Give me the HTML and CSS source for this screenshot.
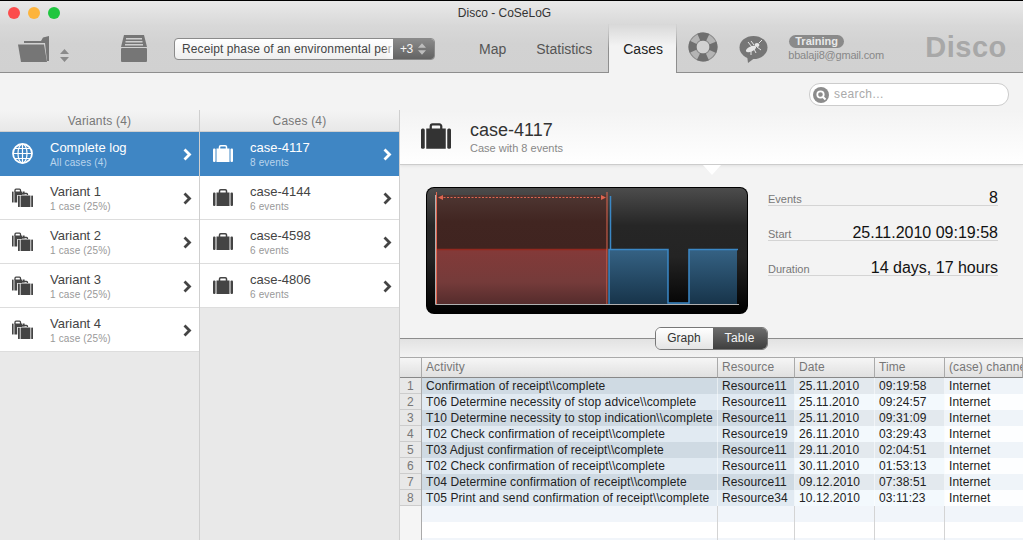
FILE: index.html
```html
<!DOCTYPE html>
<html>
<head>
  <meta charset="utf-8">
  <title>Disco - CoSeLoG</title>
  <link rel="stylesheet" href="styles.css">
</head>
<body>
  <svg class="defs" width="0" height="0">
    <symbol id="suitcase" viewBox="0 0 20 17">
      <path d="M6.5 4V2A1.2 1.2 0 0 1 7.700 .8h4.600A1.200 1.200 0 0 1 13.500 2v2" fill="none" stroke="currentColor" stroke-width="1.500"/>
      <rect x="3.500" y="3.500" width="13" height="13.500"/>
      <rect x="0" y="3.500" width="2.500" height="13.500" rx="1"/>
      <rect x="17.500" y="3.500" width="2.500" height="13.500" rx="1"/>
    </symbol>
    <symbol id="suitcases" viewBox="0 0 21 19">
      <path d="M3 4V2.200A1 1 0 0 1 4 1.200h3.500a1 1 0 0 1 1 1V4" fill="none" stroke="currentColor" stroke-width="1.300"/>
      <rect x="0" y="3.500" width="1.600" height="11" rx=".6"/>
      <rect x="2.400" y="3.500" width="8" height="11"/>
      <rect x="11" y="3.500" width="1.600" height="3"/>
      <path d="M9.500 8V6.500a1 1 0 0 1 1-1h4a1 1 0 0 1 1 1V8" fill="none" stroke="currentColor" stroke-width="1.300"/>
      <rect x="5.200" y="7" width="15.800" height="12" fill="#fff"/>
      <rect x="6" y="7.500" width="1.800" height="11.500" rx=".6"/>
      <rect x="8.600" y="7.500" width="9.800" height="11.500"/>
      <rect x="19.200" y="7.500" width="1.800" height="11.500" rx=".6"/>
    </symbol>
    <symbol id="chevron" viewBox="0 0 9 13">
      <path d="M1.500 1.500L6.500 6.500L1.500 11.500" fill="none" stroke="currentColor" stroke-width="2.800"/>
    </symbol>
    <symbol id="updown" viewBox="0 0 9 13">
      <path d="M4.500 0L9 5H0Z M0 8H9L4.500 13Z"/>
    </symbol>
  </svg>

  <div class="toolbar">
    <div class="titlebar">
      <div class="lights">
        <span class="light red"></span>
        <span class="light yellow"></span>
        <span class="light green"></span>
      </div>
      Disco - CoSeLoG
    </div>
    <div class="tools">
      <svg class="folder" width="32" height="26" viewBox="0 0 32 26">
        <path d="M6 5H23L25 1.500L31 0V25H29L27 7H6Z" fill="#767676"/>
        <path d="M0 8.500H26L29 26H3Z" fill="#767676"/>
      </svg>
      <svg class="stepper" width="9" height="13" fill="#8a8a8a"><use href="#updown"/></svg>
      <svg class="archive" width="26" height="27" viewBox="0 0 26 27">
        <path d="M3 0H23L26 12H0Z" fill="#767676"/>
        <path d="M5 3H21V4.500H5Z M4.500 6H21.500V7.500H4.500Z M4 9H22V10.500H4Z" fill="#cfcfcf"/>
        <rect x="0" y="13" width="26" height="14" rx="1" fill="#767676"/>
      </svg>
      <div class="logselect">
        <span class="logname">Receipt phase of an environmental per</span>
        <span class="logcount">+3 <svg width="8" height="12" fill="#bdbdbd"><use href="#updown"/></svg></span>
      </div>
      <div class="tabs">
        <div class="tab">Map</div>
        <div class="tab">Statistics</div>
        <div class="tab active">Cases</div>
      </div>
      <svg class="buoy" width="30" height="30" viewBox="0 0 30 30">
        <circle cx="15" cy="15" r="10.500" fill="none" stroke="#8a8a8a" stroke-width="8"/>
        <circle cx="15" cy="15" r="10.500" fill="none" stroke="#b4b4b4" stroke-width="6"/>
        <circle cx="15" cy="15" r="10.500" fill="none" stroke="#6f6f6f" stroke-width="8" stroke-dasharray="9 7.490" stroke-dashoffset="4.500"/>
      </svg>
      <svg class="bubble" width="29" height="27" viewBox="0 0 29 27">
        <ellipse cx="14.500" cy="11.500" rx="14" ry="11.500" fill="#767676"/>
        <path d="M8 19L9 27L17 21Z" fill="#767676"/>
        <g stroke="#e6e6e6" stroke-width="1" fill="#e6e6e6">
          <ellipse cx="12" cy="13" rx="5.500" ry="2.500" transform="rotate(-25 12 13)" stroke="none"/>
          <ellipse cx="18" cy="9" rx="2.400" ry="2" stroke="none"/>
          <path d="M15 9L12 5M13 11L9 6M12 15L12 19M15 13L17 17M18 11L22 14M20 7L23 4" fill="none"/>
        </g>
      </svg>
      <div class="account">
        <span class="badge">Training</span>
        <span class="email">bbalaji8@gmail.com</span>
      </div>
      <div class="brand">Disco</div>
    </div>
  </div>

  <div class="searchbar">
    <div class="search">
      <svg width="16" height="16" viewBox="0 0 16 16">
        <circle cx="8" cy="8" r="8" fill="#8c8c8c"/>
        <circle cx="7.500" cy="7.500" r="3.200" fill="none" stroke="#fff" stroke-width="1.800"/>
        <path d="M10 10L12.500 12.500" stroke="#fff" stroke-width="2"/>
      </svg>
      <span class="search-hint">search...</span>
    </div>
  </div>

  <div class="main">
    <div class="column">
      <div class="column-head">Variants (4)</div>
      <div class="item selected">
        <svg class="item-icon" width="21" height="21" viewBox="0 0 21 21" fill="none" stroke="#fff">
          <circle cx="10.500" cy="10.500" r="9.500" stroke-width="1.800"/>
          <ellipse cx="10.500" cy="10.500" rx="4.500" ry="9.500" stroke-width="1.200"/>
          <path d="M10.500 1V20M1 10.500H20M2.500 5.500H18.500M2.500 15.500H18.500" stroke-width="1.200"/>
        </svg>
        <div class="item-text"><div class="item-title">Complete log</div><div class="item-sub">All cases (4)</div></div>
        <svg class="chevron" width="9" height="13"><use href="#chevron"/></svg>
      </div>
      <div class="item">
        <svg class="item-icon" width="21" height="19"><use href="#suitcases"/></svg>
        <div class="item-text"><div class="item-title">Variant 1</div><div class="item-sub">1 case (25%)</div></div>
        <svg class="chevron" width="9" height="13"><use href="#chevron"/></svg>
      </div>
      <div class="item">
        <svg class="item-icon" width="21" height="19"><use href="#suitcases"/></svg>
        <div class="item-text"><div class="item-title">Variant 2</div><div class="item-sub">1 case (25%)</div></div>
        <svg class="chevron" width="9" height="13"><use href="#chevron"/></svg>
      </div>
      <div class="item">
        <svg class="item-icon" width="21" height="19"><use href="#suitcases"/></svg>
        <div class="item-text"><div class="item-title">Variant 3</div><div class="item-sub">1 case (25%)</div></div>
        <svg class="chevron" width="9" height="13"><use href="#chevron"/></svg>
      </div>
      <div class="item">
        <svg class="item-icon" width="21" height="19"><use href="#suitcases"/></svg>
        <div class="item-text"><div class="item-title">Variant 4</div><div class="item-sub">1 case (25%)</div></div>
        <svg class="chevron" width="9" height="13"><use href="#chevron"/></svg>
      </div>
    </div>

    <div class="column">
      <div class="column-head">Cases (4)</div>
      <div class="item selected">
        <svg class="item-icon" width="20" height="17"><use href="#suitcase"/></svg>
        <div class="item-text"><div class="item-title">case-4117</div><div class="item-sub">8 events</div></div>
        <svg class="chevron" width="9" height="13"><use href="#chevron"/></svg>
      </div>
      <div class="item">
        <svg class="item-icon" width="20" height="17"><use href="#suitcase"/></svg>
        <div class="item-text"><div class="item-title">case-4144</div><div class="item-sub">6 events</div></div>
        <svg class="chevron" width="9" height="13"><use href="#chevron"/></svg>
      </div>
      <div class="item">
        <svg class="item-icon" width="20" height="17"><use href="#suitcase"/></svg>
        <div class="item-text"><div class="item-title">case-4598</div><div class="item-sub">6 events</div></div>
        <svg class="chevron" width="9" height="13"><use href="#chevron"/></svg>
      </div>
      <div class="item">
        <svg class="item-icon" width="20" height="17"><use href="#suitcase"/></svg>
        <div class="item-text"><div class="item-title">case-4806</div><div class="item-sub">6 events</div></div>
        <svg class="chevron" width="9" height="13"><use href="#chevron"/></svg>
      </div>
    </div>

    <div class="detail">
      <div class="detail-head">
        <svg class="detail-icon" width="30" height="26"><use href="#suitcase"/></svg>
        <div>
          <div class="detail-title">case-4117</div>
          <div class="detail-sub">Case with 8 events</div>
        </div>
      </div>

      <div class="overview">
        <svg class="chart" width="322" height="127" viewBox="0 0 322 127">
          <defs>
            <linearGradient id="chartbg" x1="0" y1="0" x2="0" y2="1">
              <stop offset="0" stop-color="#4c4c4c"/>
              <stop offset=".3" stop-color="#262626"/>
              <stop offset=".55" stop-color="#242424"/>
              <stop offset="1" stop-color="#000"/>
            </linearGradient>
            <linearGradient id="redtop" x1="0" y1="0" x2="0" y2="1">
              <stop offset="0" stop-color="#4e3632"/>
              <stop offset=".5" stop-color="#412521"/>
              <stop offset="1" stop-color="#402420"/>
            </linearGradient>
            <linearGradient id="redlow" x1="0" y1="0" x2="0" y2="1">
              <stop offset="0" stop-color="#843a39"/>
              <stop offset=".6" stop-color="#753b3a"/>
              <stop offset="1" stop-color="#552c2c"/>
            </linearGradient>
            <linearGradient id="bluelow" x1="0" y1="0" x2="0" y2="1">
              <stop offset="0" stop-color="#356284"/>
              <stop offset="1" stop-color="#17344a"/>
            </linearGradient>
          </defs>
          <rect width="322" height="127" rx="8" fill="#000"/>
          <rect x="1" y="1" width="320" height="125" rx="7" fill="url(#chartbg)"/>
          <rect x="11" y="8" width="170" height="54" fill="url(#redtop)"/>
          <rect x="11" y="62" width="170" height="55" fill="url(#redlow)"/>
          <path d="M11 62.500H181" stroke="#93281f" stroke-width="1.500"/>
          <path d="M183 117V62.500H242V116H263V62.500H311V117Z" fill="url(#bluelow)"/>
          <path d="M183 117V62.500H242V116H263V62.500H312" fill="none" stroke="#3b88c6" stroke-width="1.500"/>
          <path d="M184.500 62V9" stroke="#3b88c6" stroke-width="1.500"/>
          <path d="M10.500 5V117M181 5V117" stroke="#e0654f" stroke-width="1"/>
          <path d="M14 10.500H178" stroke="#e0654f" stroke-width="1" stroke-dasharray="2 1.500"/>
          <path d="M12 10.500L17 8V13Z M180 10.500L175 8V13Z" fill="#e0654f"/>
          <path d="M9.500 8V117.500H313" stroke="#b0b0b0" stroke-width="1" fill="none"/>
        </svg>
        <div class="stats">
          <div class="stat"><span class="stat-label">Events</span><span class="stat-value">8</span></div>
          <div class="stat"><span class="stat-label">Start</span><span class="stat-value">25.11.2010 09:19:58</span></div>
          <div class="stat"><span class="stat-label">Duration</span><span class="stat-value">14 days, 17 hours</span></div>
        </div>
      </div>

      <div class="switchbar">
        <div class="switch">
          <span class="switch-btn">Graph</span>
          <span class="switch-btn on">Table</span>
        </div>
      </div>

      <table class="events">
        <colgroup>
          <col class="c-no"><col class="c-act"><col class="c-res"><col class="c-date"><col class="c-time"><col>
        </colgroup>
        <thead>
          <tr><th></th><th>Activity</th><th>Resource</th><th>Date</th><th>Time</th><th>(case) channel</th></tr>
        </thead>
        <tbody>
          <tr><td>1</td><td>Confirmation of receipt\\complete</td><td>Resource11</td><td>25.11.2010</td><td>09:19:58</td><td>Internet</td></tr>
          <tr><td>2</td><td>T06 Determine necessity of stop advice\\complete</td><td>Resource11</td><td>25.11.2010</td><td>09:24:57</td><td>Internet</td></tr>
          <tr><td>3</td><td>T10 Determine necessity to stop indication\\complete</td><td>Resource11</td><td>25.11.2010</td><td>09:31:09</td><td>Internet</td></tr>
          <tr><td>4</td><td>T02 Check confirmation of receipt\\complete</td><td>Resource19</td><td>26.11.2010</td><td>03:29:43</td><td>Internet</td></tr>
          <tr><td>5</td><td>T03 Adjust confirmation of receipt\\complete</td><td>Resource11</td><td>29.11.2010</td><td>02:04:51</td><td>Internet</td></tr>
          <tr><td>6</td><td>T02 Check confirmation of receipt\\complete</td><td>Resource11</td><td>30.11.2010</td><td>01:53:13</td><td>Internet</td></tr>
          <tr><td>7</td><td>T04 Determine confirmation of receipt\\complete</td><td>Resource11</td><td>09.12.2010</td><td>07:38:51</td><td>Internet</td></tr>
          <tr><td>8</td><td>T05 Print and send confirmation of receipt\\complete</td><td>Resource34</td><td>10.12.2010</td><td>03:11:23</td><td>Internet</td></tr>
          <tr class="empty"><td></td><td></td><td></td><td></td><td></td><td></td></tr>
          <tr class="empty"><td></td><td></td><td></td><td></td><td></td><td></td></tr>
          <tr class="empty"><td></td><td></td><td></td><td></td><td></td><td></td></tr>
        </tbody>
      </table>
    </div>
  </div>
</body>
</html>
```

FILE: styles.css
```css
html, body {
  height: 100%;
}

body {
  margin: 0;
  overflow: hidden;
  background: #f3f3f3;
  font: 12px "Liberation Sans", Arial, sans-serif;
  color: #222;
}

.defs {
  display: block;
}

/* window toolbar */
.toolbar {
  height: 71px;
  border-top: 1px solid #000;
  border-bottom: 1px solid #8e8e8e;
  background: linear-gradient(#e9e9e9, #d8d8d8 35%, #d2d2d2 60%, #d1d1d1);
}

.titlebar {
  display: flex;
  justify-content: center;
  align-items: center;
  position: relative;
  height: 23px;
  padding-right: 14px;
  font-size: 12px;
  color: #333;
}

.lights {
  position: absolute;
  left: 8px;
  top: 6px;
  display: flex;
  gap: 8px;
}

.light {
  width: 12px;
  height: 12px;
  border-radius: 50%;
}

.red { background: #fc4d4d; }
.yellow { background: #fdb43c; }
.green { background: #1fc63f; }

.tools {
  display: flex;
  align-items: flex-start;
  height: 48px;
  padding-left: 18px;
}

.folder {
  margin-top: 12px;
}

.stepper {
  margin: 25px 0 0 10px;
}

.archive {
  margin: 11px 0 0 52px;
}

.logselect {
  display: flex;
  width: 259px;
  height: 20px;
  margin: 14px 0 0 27px;
  border: 1px solid #8a8a8a;
  border-radius: 4px;
  overflow: hidden;
  background: linear-gradient(#fff, #eee);
}

.logname {
  flex: 1;
  padding-left: 7px;
  overflow: hidden;
  white-space: nowrap;
  line-height: 20px;
  letter-spacing: .1px;
  color: #444;
}

.logcount {
  position: relative;
  display: flex;
  align-items: center;
  gap: 5px;
  width: 34px;
  padding-left: 7px;
  font-size: 12px;
  letter-spacing: -.4px;
  color: #f6f6f6;
  background: linear-gradient(#8a8a8a, #636363);
  box-shadow: -6px 0 6px -1px rgba(255, 255, 255, .85);
}

.tabs {
  display: flex;
  height: 48px;
  margin-left: 34px;
  font-size: 14px;
  color: #555;
}

.tab {
  padding: 17px 10px 0;
}

.tab + .tab {
  margin-left: 10px;
}

.tab.active {
  box-sizing: border-box;
  width: 69px;
  height: 49px;
  margin: 0 0 -1px 6px;
  padding: 17px 0 0 14px;
  color: #222;
  background: linear-gradient(#d8d8d8, #f3f3f3 45%);
  border-left: 1px solid #8e8e8e;
  border-right: 1px solid #8e8e8e;
  border-image: linear-gradient(rgba(142, 142, 142, 0), #8e8e8e 50%) 1;
}

.buoy {
  margin: 8px 0 0 11px;
}

.bubble {
  margin: 12px 0 0 21px;
}

.account {
  display: flex;
  flex-direction: column;
  align-items: flex-start;
  margin: 11px 0 0 20px;
  width: 96px;
}

.badge {
  margin-left: 1px;
  padding: 0 6px;
  border-radius: 7px;
  background: #8a8a8a;
  color: #e8e8e8;
  font-size: 11px;
  font-weight: bold;
  line-height: 13px;
}

.email {
  margin-top: 1px;
  font-size: 11px;
  line-height: 12px;
  letter-spacing: -.2px;
  color: #888;
  white-space: nowrap;
}

.brand {
  margin: 7px 0 0 41px;
  font-size: 29px;
  font-weight: bold;
  letter-spacing: .5px;
  color: #a8a8a8;
}

.searchbar {
  display: flex;
  justify-content: flex-end;
  height: 27px;
  padding: 10px 14px 0 0;
}

.search {
  display: flex;
  align-items: center;
  gap: 5px;
  width: 195px;
  height: 21px;
  padding-left: 3px;
  border: 1px solid #ccc;
  border-radius: 11px;
  background: #fff;
  color: #aaa;
  font-size: 12px;
  letter-spacing: .4px;
}

.search-hint {
  margin-top: -2px;
}

/* lists */
.main {
  display: flex;
  height: 430px;
}

.column {
  width: 199px;
  flex: none;
  border-right: 1px solid #cfcfcf;
  background: #e9e9e9;
}

.column-head {
  height: 21px;
  border-bottom: 1px solid #cfcfcf;
  background: linear-gradient(#f4f4f4, #e8e8e8);
  text-align: center;
  line-height: 22px;
  letter-spacing: .2px;
  color: #777;
}

.item {
  display: flex;
  align-items: center;
  height: 43px;
  border-bottom: 1px solid #ddd;
  background: #fff;
  color: #444;
}

.item-icon {
  flex: none;
  margin-left: 12px;
  color: #444;
}

.item-icon use,
.detail-icon use {
  fill: currentColor;
}

.item-text {
  flex: 1;
  margin-left: 17px;
  padding-top: 2px;
}

.column + .column .item-icon {
  margin-left: 13px;
}

.item-title {
  font-size: 13px;
  line-height: 16px;
}

.item-sub {
  font-size: 10px;
  line-height: 14px;
  letter-spacing: .15px;
  color: #999;
}

.chevron {
  margin: 2px 7px 0 0;
  color: #444;
}

.item.selected {
  background: #3f86c4;
  border-bottom-color: #3f86c4;
  color: #fff;
}

.item.selected .item-icon,
.item.selected .chevron {
  color: #fff;
}

.item.selected .item-sub {
  color: #b9d4ec;
}

/* case detail */
.detail {
  flex: 1;
  min-width: 0;
  overflow: hidden;
}

.detail-head {
  display: flex;
  align-items: center;
  position: relative;
  height: 54px;
  border-bottom: 1px solid #ccc;
  background: linear-gradient(#f3f3f3, #fff);
  box-shadow: 0 1px 3px rgba(0, 0, 0, .08);
}

.detail-head:after {
  content: '';
  position: absolute;
  left: 303px;
  top: 55px;
  width: 0;
  height: 0;
  border-left: 9px solid transparent;
  border-right: 9px solid transparent;
  border-top: 10px solid #fff;
}

.detail-icon {
  margin: 0 19px 3px 21px;
  color: #333;
}

.detail-title {
  font-size: 18px;
  line-height: 22px;
  color: #333;
}

.detail-sub {
  font-size: 11px;
  line-height: 15px;
  color: #888;
}

.overview {
  display: flex;
  padding: 22px 25px 0 26px;
}

.chart {
  display: block;
  flex: none;
}

.stats {
  flex: 1;
  margin-left: 20px;
}

.stat {
  display: flex;
  justify-content: space-between;
  align-items: flex-end;
  height: 18px;
  margin-bottom: 16px;
  border-bottom: 1px solid #d4d4d4;
}

.stat-label {
  font-size: 11px;
  color: #777;
}

.stat-value {
  margin-bottom: -2px;
  font-size: 16px;
  line-height: 18px;
  color: #111;
}

.switchbar {
  display: flex;
  justify-content: center;
  height: 30px;
  margin-top: 13px;
  background: linear-gradient(#f3f3f3 11px, #8c8c8c 11px, #8c8c8c 12px, #e2e2e2 12px, #f3f3f3);
}

.switch {
  display: flex;
  height: 21px;
  border: 1px solid #777;
  border-radius: 6px;
  overflow: hidden;
  font-size: 12px;
  line-height: 21px;
}

.switch-btn {
  padding: 0 12px 0 11px;
  background: linear-gradient(#fff, #e4e4e4);
  color: #333;
}

.switch-btn.on {
  padding: 0 12px;
  letter-spacing: .3px;
  background: linear-gradient(#6d6d6d, #3f3f3f);
  color: #f4f4f4;
}

/* event table */
.events {
  width: 623px;
  table-layout: fixed;
  border-collapse: separate;
  border-spacing: 0;
  font-size: 12px;
  letter-spacing: .1px;
}

.c-no { width: 22px; }
.c-act { width: 296px; }
.c-res { width: 77px; }
.c-date { width: 80px; }
.c-time { width: 70px; }

.events th {
  height: 18px;
  padding: 0 0 1px 4px;
  border-top: 1px solid #aaa;
  border-bottom: 1px solid #888;
  border-right: 1px solid #aaa;
  background: linear-gradient(#f6f6f6, #e0e0e0);
  font-weight: normal;
  text-align: left;
  color: #777;
  white-space: nowrap;
  overflow: hidden;
}

.events td {
  height: 16px;
  padding: 0 0 0 4px;
  line-height: 16px;
  white-space: nowrap;
  overflow: hidden;
  color: #222;
}

.events td:nth-child(1) {
  padding: 0;
  border-right: 1px solid #aaa;
  box-sizing: border-box;
  text-align: center;
  color: #777;
  background: #e8e8e8;
  box-shadow: inset 0 -1px 0 #ccc;
}

.events tbody tr:nth-child(odd) td:nth-child(2),
.events tbody tr:nth-child(odd) td:nth-child(3) { background: #cfdae3; }
.events tbody tr:nth-child(even) td:nth-child(2),
.events tbody tr:nth-child(even) td:nth-child(3) { background: #e1eaf2; }
.events tbody tr:nth-child(odd) td:nth-child(4),
.events tbody tr:nth-child(odd) td:nth-child(5) { background: #e3e9ee; }
.events tbody tr:nth-child(even) td:nth-child(4),
.events tbody tr:nth-child(even) td:nth-child(5) { background: #f3f9fd; }
.events tbody tr:nth-child(odd) td:nth-child(6) { background: #eff4f9; }
.events tbody tr:nth-child(even) td:nth-child(6) { background: #fdfeff; }

.events td:nth-child(2),
.events td:nth-child(3),
.events td:nth-child(4),
.events td:nth-child(5) {
  box-sizing: border-box;
  border-right: 1px solid rgba(255, 255, 255, .5);
}

.events tr.empty td:nth-child(n+2) {
  border-right-color: #d4d4d4;
}

.events tr.empty:nth-child(odd) td:nth-child(n+2) { background: #f1f5fa; }
.events tr.empty:nth-child(even) td:nth-child(n+2) { background: #fff; }

.events tr.empty td:nth-child(1) {
  background: #f5f5f5;
  box-shadow: none;
}
```
